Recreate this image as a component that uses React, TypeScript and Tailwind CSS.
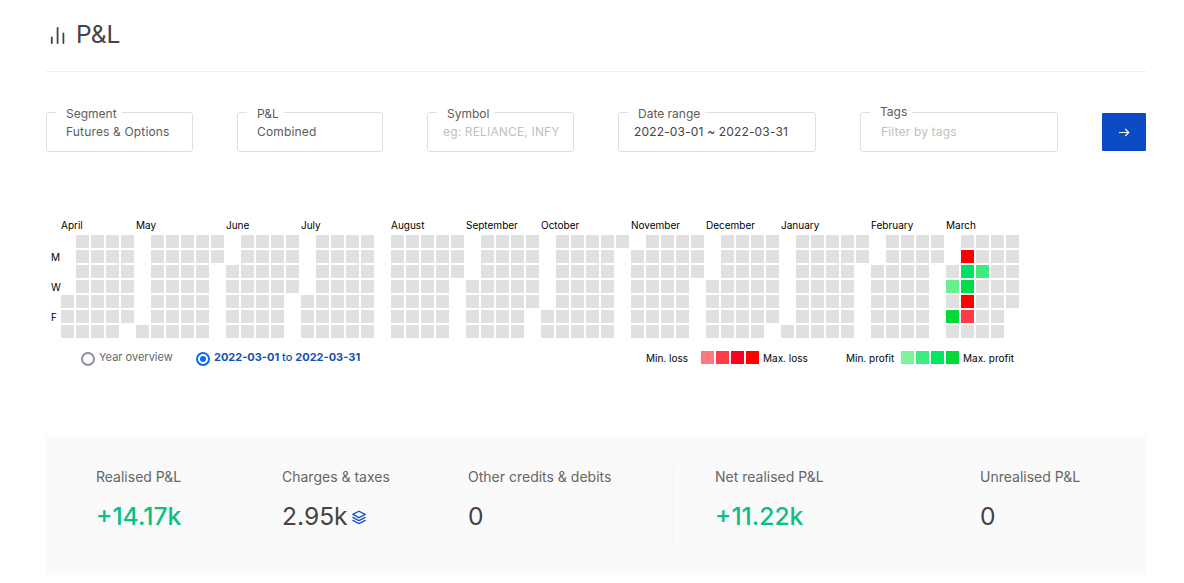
import clsx from "clsx";
import { ReactNode } from "react";

type Month = {
  name: string;
  // weekday of the 1st, 0 = Sunday
  start: number;
  days: number;
};

const months: Month[] = [
  { name: "April", start: 4, days: 30 },
  { name: "May", start: 6, days: 31 },
  { name: "June", start: 2, days: 30 },
  { name: "July", start: 4, days: 31 },
  { name: "August", start: 0, days: 31 },
  { name: "September", start: 3, days: 30 },
  { name: "October", start: 5, days: 31 },
  { name: "November", start: 1, days: 30 },
  { name: "December", start: 3, days: 31 },
  { name: "January", start: 6, days: 31 },
  { name: "February", start: 2, days: 28 },
  { name: "March", start: 2, days: 31 },
];

const marchColors: Record<number, string> = {
  2: "bg-[#66f08f]",
  4: "bg-[#00d936]",
  7: "bg-[#ff0000]",
  8: "bg-[#00e266]",
  9: "bg-[#00dd4c]",
  10: "bg-[#ff0000]",
  11: "bg-[#ff3b48]",
  15: "bg-[#3deb80]",
};

const lossColors = [
  "bg-[#ff7880]",
  "bg-[#ff3b48]",
  "bg-[#ff0024]",
  "bg-[#ff0000]",
];
const profitColors = [
  "bg-[#7ef29f]",
  "bg-[#3deb80]",
  "bg-[#00e766]",
  "bg-[#00d936]",
];

type FieldProps = {
  label: string;
  className: string;
  labelClassName?: string;
  children: ReactNode;
};

const Field = ({ label, className, labelClassName, children }: FieldProps) => (
  <div
    className={clsx(
      "relative h-10 rounded-[3px] border border-[#dfdfdf] pt-[9px] leading-5 tracking-[0.16px]",
      className
    )}
  >
    <label
      className={clsx(
        "absolute left-[9px] bg-white pl-[10px] pr-[5px] leading-4 tracking-normal text-[#5c5c5c]",
        labelClassName ?? "-top-[7px]"
      )}
    >
      {label}
    </label>
    {children}
  </div>
);

const MonthGrid = ({ month }: { month: Month }) => {
  const days = Array.from({ length: month.days }, (_, i) => i + 1);
  // a month that ends on a Saturday leaves an empty week after it
  const endsOnSaturday = (month.start + month.days) % 7 === 0;
  return (
    <div className={endsOnSaturday ? "mr-[15px]" : ""}>
      <p className="h-4 w-0 whitespace-nowrap text-[10px] leading-4">
        {month.name}
      </p>
      <div className="mt-[2px] mr-[2px] grid grid-flow-col grid-rows-[repeat(7,13px)] auto-cols-[13px] gap-[2px]">
        {Array.from({ length: month.start }, (_, i) => (
          <span key={`blank-${i}`} />
        ))}
        {days.map((day) => (
          <span
            key={day}
            className={
              (month.name === "March" && marchColors[day]) || "bg-[#e0e0e0]"
            }
          />
        ))}
      </div>
    </div>
  );
};

type LegendProps = {
  from: string;
  to: string;
  colors: string[];
  className: string;
};

const Legend = ({ from, to, colors, className }: LegendProps) => (
  <div className={clsx("flex h-[14px] text-[10px] leading-[14px]", className)}>
    <span className="flex-1">{from}</span>
    <div className="flex gap-[2px]">
      {colors.map((color) => (
        <span key={color} className={clsx("h-[13px] w-[13px]", color)} />
      ))}
    </div>
    <span className="ml-1 w-[52px] whitespace-nowrap">{to}</span>
  </div>
);

type StatProps = {
  label: string;
  value: string;
  className: string;
  profit?: boolean;
  children?: ReactNode;
};

const Stat = ({ label, value, className, profit, children }: StatProps) => (
  <div className={className}>
    <p className="mt-px text-[14px] leading-5 text-[#666]">{label}</p>
    <div className="mt-[13px] flex items-center">
      <p
        className={clsx(
          "text-[24.6px] leading-8",
          profit ? "font-medium text-[#0abf87]" : "text-[#444]"
        )}
      >
        {value}
      </p>
      {children}
    </div>
  </div>
);

const App = () => {
  return (
    <div className="h-[583px] w-[1184px] overflow-hidden bg-white px-[46px] font-['Inter',sans-serif] text-[12px] text-[#444]">
      <header className="flex h-[72px] w-[1100px] border-b border-[#eee] pt-[18px]">
        <svg
          className="mt-2 ml-1 h-[18px] w-4"
          viewBox="0 0 16 18"
          stroke="#444"
          strokeWidth="1.8"
          strokeLinecap="round"
        >
          <path d="M1.8 11.4V17M7.6 2V17M13.4 7.4V17" />
        </svg>
        <h1 className="ml-[10px] text-[24.5px] leading-8">P&amp;L</h1>
      </header>

      <form className="mt-10 flex w-[1100px] justify-between">
        <Field label="Segment" className="w-[147px] pl-[19px] text-[#5c5c5c]">
          Futures &amp; Options
        </Field>
        <Field label="P&amp;L" className="w-[146px] pl-[19px] text-[#5c5c5c]">
          Combined
        </Field>
        <Field label="Symbol" className="w-[147px] pl-[15px] text-[#c0c0c0]">
          eg: RELIANCE, INFY
        </Field>
        <Field label="Date range" className="w-[198px] pl-[15px]">
          2022-03-01 ~ 2022-03-31
        </Field>
        <Field
          label="Tags"
          className="w-[198px] pl-5 text-[#c0c0c0]"
          labelClassName="-top-[9px]"
        >
          Filter by tags
        </Field>
        <button
          type="button"
          className="mt-px flex h-[38px] w-11 items-center justify-center rounded-[1px] bg-[#0a4bc4]"
        >
          <svg
            className="h-3 w-3"
            viewBox="0 0 12 12"
            fill="none"
            stroke="#fff"
            strokeWidth="1.2"
          >
            <path d="M1 6.5H10.6M7.2 3L10.7 6.5L7.2 10" />
          </svg>
        </button>
      </form>

      <section className="mt-[65px] text-black">
        <div className="flex">
          <div className="grid w-[15px] grid-rows-[repeat(3,30px)] pt-[26px] pl-[5px] text-[10px] leading-[29px]">
            <span>M</span>
            <span>W</span>
            <span>F</span>
          </div>
          {months.map((month) => (
            <MonthGrid key={month.name} month={month} />
          ))}
        </div>
        <div className="mt-[13px] flex h-[15px]">
          <label className="ml-[35px] flex w-[115px] text-[11px] leading-4 text-[#666]">
            <span className="mt-px mr-1 h-[14px] w-[14px] rounded-full border-2 border-[#8f8f9d]" />
            <span className="-mt-[2px]">Year overview</span>
          </label>
          <label className="flex w-[450px] text-[11px] leading-4 text-[#1450b0]">
            <span className="mt-px mr-1 flex h-[14px] w-[14px] items-center justify-center rounded-full border-2 border-[#0a6cf5]">
              <span className="h-[6px] w-[6px] rounded-full bg-[#0a6cf5]" />
            </span>
            <span className="-mt-[2px] font-medium">
              <b>2022-03-01</b> to <b>2022-03-31</b>
            </span>
          </label>
          <Legend
            from="Min. loss"
            to="Max. loss"
            colors={lossColors}
            className="w-[169px]"
          />
          <Legend
            from="Min. profit"
            to="Max. profit"
            colors={profitColors}
            className="ml-[31px] w-[169px]"
          />
        </div>
      </section>

      <section className="mt-[70px] flex h-[137px] w-[1100px] bg-[#fafafa] pt-[30px] pl-[50px]">
        <Stat label="Realised P&amp;L" value="+14.17k" profit className="w-[186px]" />
        <Stat label="Charges &amp; taxes" value="2.95k" className="w-[186px]">
          <svg
            className="mt-[2px] ml-[3px] h-4 w-4"
            viewBox="0 0 16 16"
            fill="none"
            stroke="#1450c4"
            strokeWidth="1.2"
            strokeLinejoin="round"
            strokeLinecap="round"
          >
            <path d="M8 2.2L14.2 5.4L8 8.6L1.8 5.4ZM1.8 8.4L8 11.6L14.2 8.4M1.8 11.4L8 14.6L14.2 11.4" />
          </svg>
        </Stat>
        <Stat label="Other credits &amp; debits" value="0" className="w-[205px]" />
        <div className="h-[78px] w-[42px] border-l border-[#eee]" />
        <Stat label="Net realised P&amp;L" value="+11.22k" profit className="w-[265px]" />
        <Stat label="Unrealised P&amp;L" value="0" className="w-[110px]" />
      </section>
    </div>
  );
};

export default App;
